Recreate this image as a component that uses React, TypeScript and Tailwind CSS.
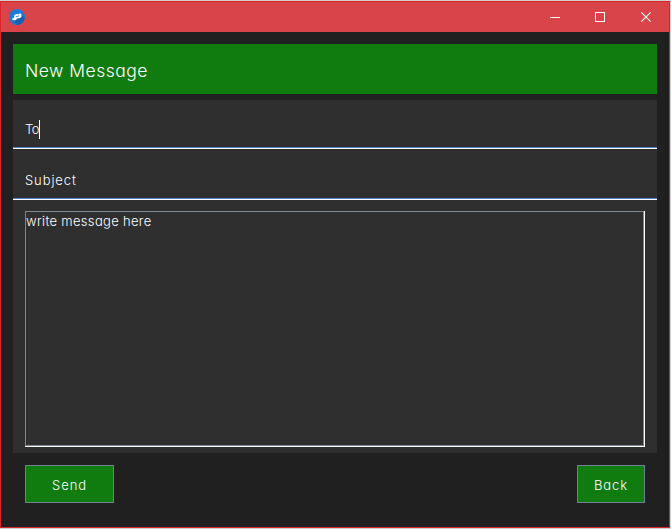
import React from "react";

function TitleBar() {
  return (
    <header className="flex h-[30px] shrink-0 items-center bg-[#d94448] pl-2">
      <svg width="16" height="16" viewBox="0 0 16 16" className="mb-px">
        <circle cx="8" cy="8" r="8" fill="#1b7adb" />
        <path d="M12.5 6 L15.8 9 A8 8 0 0 1 8 16 L4 11.5 Z" fill="#1a5fac" />
        <path d="M5 6.6 L7 5 L9.5 5.2 L11 4.2 L12.4 5.2 L12.4 8 L10.6 9.2 L8 9.4 L7 11 L5 11.4 L3 10.6 L3.6 9.2 L5.4 8.6 Z" fill="#fff" />
        <path d="M6.8 7.8 L10 6.8" stroke="#1b7adb" strokeWidth="0.9" fill="none" />
      </svg>
      <svg width="102" height="12" viewBox="0 0 102 12" className="mr-[17px] mb-px ml-auto" fill="none" stroke="#fff">
        <path d="M0 6.5 H10" />
        <rect x="45.5" y="1.5" width="9" height="9" />
        <path d="M91.3 1.3 L100.7 10.7 M100.7 1.3 L91.3 10.7" strokeWidth="1.1" />
      </svg>
    </header>
  );
}

export default function App() {
  return (
    <div className="h-[529px] w-[671px] overflow-hidden bg-[#d4d0d1] pt-px pr-px pb-px font-['Inter',sans-serif] font-light text-white [font-feature-settings:'cv11']">
      <div className="flex h-[527px] w-[670px] flex-col border border-[#d8272b] bg-[#202020]">
        <TitleBar />
        <main className="flex flex-1 flex-col px-3 pt-3">
          <h1 className="flex h-[50px] w-[644px] items-center bg-[#107c10] pt-1 pl-3 text-[17.5px] leading-6 font-light tracking-[0.5px]">
            New Message
          </h1>
          <section className="mt-1.5 flex h-[353px] w-[644px] flex-col bg-[#2f2f2f]">
            <div className="flex h-12 items-center border-b border-[#5c7bc8] pt-[11px] pl-3 text-[13px] leading-5">
              <span className="w-[14px] tracking-[-0.5px]">To</span>
              <span className="h-[19px] w-px bg-white" />
            </div>
            <div className="h-px bg-white" />
            <div className="flex h-[50px] items-center border-b border-[#5c7bc8] pt-[13px] pl-3 text-[13px] leading-5 tracking-[0.9px]">
              Subject
            </div>
            <div className="h-px bg-white" />
            <div className="mt-[11px] ml-3 h-[236px] w-[620px] border-r border-b border-white">
              <div className="h-full border border-[#7b8794] text-[13px] leading-[18px] tracking-[0.32px]">
                write message here
              </div>
            </div>
          </section>
          <footer className="mt-3 flex w-[644px] justify-between px-3 text-[13px] leading-5">
            <button className="h-[38px] w-[89px] border border-[#708090] bg-[#107c10] pt-px tracking-[0.9px]">Send</button>
            <button className="h-[38px] w-[68px] border border-[#708090] bg-[#107c10] pt-px tracking-[0.9px]">Back</button>
          </footer>
        </main>
      </div>
    </div>
  );
}
